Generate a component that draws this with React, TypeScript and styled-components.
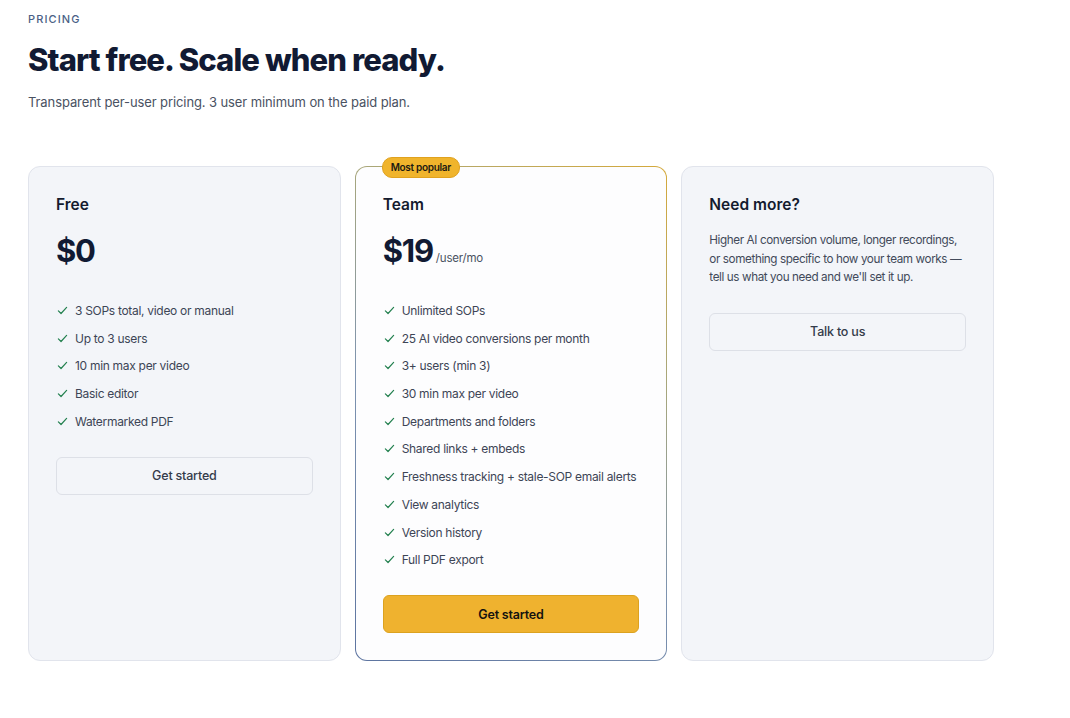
import React from 'react'
import styled, { createGlobalStyle } from 'styled-components'

const GlobalStyle = createGlobalStyle`
  body {
    margin: 0;
    background: #ffffff;
    font-family: Inter, "Noto Sans", sans-serif;
    color: #0f172a;
  }
`

const Page = styled.main`
  padding: 12px 28px 40px;
  width: 966px;
`

const Eyebrow = styled.div`
  font-size: 11px;
  font-weight: 500;
  letter-spacing: 1.1px;
  color: #4b5f86;
  line-height: 14px;
`

const Heading = styled.h1`
  margin: 14px 0 0;
  font-size: 31px;
  font-weight: 800;
  letter-spacing: -0.9px;
  line-height: 40px;
  color: #111a33;
`

const Lead = styled.p`
  margin: 12px 0 0;
  font-size: 13px;
  color: #4a5262;
  line-height: 20px;
  letter-spacing: -0.1px;
`

const Plans = styled.section`
  margin-top: 54px;
  display: grid;
  grid-template-columns: repeat(3, 1fr);
  gap: 14px;
`

const Card = styled.div<{ $featured?: boolean }>`
  position: relative;
  min-height: 494px;
  box-sizing: border-box;
  padding: 27px 27px;
  border-radius: 12px;
  border: 1px solid ${({ $featured }) => ($featured ? 'transparent' : '#e1e4ec')};
  background: ${({ $featured }) =>
    $featured
      ? 'linear-gradient(#fdfdfe, #fdfdfe) padding-box, linear-gradient(215deg, #d5a93a 0%, #a9a77a 30%, #7d93b0 60%, #5d74a0 100%) border-box'
      : '#f3f5f9'};
  display: flex;
  flex-direction: column;
`

const Badge = styled.span`
  position: absolute;
  top: -10px;
  left: 26px;
  padding: 0 8px;
  height: 19px;
  line-height: 19px;
  border-radius: 10px;
  background: #f0b42c;
  border: 1px solid #e0a21f;
  font-size: 10px;
  font-weight: 600;
  letter-spacing: -0.3px;
  color: #1c1a12;
`

const PlanName = styled.h2`
  margin: 0;
  font-size: 15.5px;
  font-weight: 600;
  line-height: 22px;
  color: #141b2e;
`

const PriceRow = styled.div`
  margin-top: 16px;
  display: flex;
  align-items: baseline;
  gap: 3px;
`

const Price = styled.span`
  font-size: 31px;
  font-weight: 700;
  letter-spacing: -1.2px;
  line-height: 38px;
  color: #111a33;
`

const Unit = styled.span`
  font-size: 11.5px;
  letter-spacing: -0.2px;
  color: #4a5262;
`

const Features = styled.ul`
  list-style: none;
  margin: 31px 0 0;
  padding: 0;
  display: flex;
  flex-direction: column;
  gap: 8.7px;
`

const Feature = styled.li`
  display: flex;
  align-items: center;
  gap: 7px;
  font-size: 12px;
  line-height: 19px;
  color: #3d4556;
  letter-spacing: -0.3px;
  white-space: nowrap;
`

const Check = styled.svg`
  width: 11px;
  height: 11px;
  flex: none;
  margin-left: 1px;
`

const Button = styled.button<{ $primary?: boolean }>`
  margin-top: 26px;
  width: 100%;
  height: 38px;
  border-radius: 6px;
  border: 1px solid ${({ $primary }) => ($primary ? '#dca21f' : '#dde0e7')};
  background: ${({ $primary }) => ($primary ? '#efb22f' : 'transparent')};
  font-family: Inter, "Noto Sans", sans-serif;
  font-size: 12.5px;
  letter-spacing: -0.2px;
  font-weight: ${({ $primary }) => ($primary ? 600 : 500)};
  color: ${({ $primary }) => ($primary ? '#14130f' : '#333b4a')};
  cursor: pointer;
`

const Blurb = styled.p`
  margin: 15px 0 0;
  font-size: 11.7px;
  line-height: 18.5px;
  color: #424a5a;
  letter-spacing: -0.4px;
`

const CheckIcon = () => (
  <Check viewBox="0 0 12 12" fill="none">
    <path d="M1.5 6.4 L4.4 9.3 L10.5 2.6" stroke="#23804f" strokeWidth="1.3" strokeLinecap="round" strokeLinejoin="round" />
  </Check>
)

const freeFeatures = [
  '3 SOPs total, video or manual',
  'Up to 3 users',
  '10 min max per video',
  'Basic editor',
  'Watermarked PDF',
]

const teamFeatures = [
  'Unlimited SOPs',
  '25 AI video conversions per month',
  '3+ users (min 3)',
  '30 min max per video',
  'Departments and folders',
  'Shared links + embeds',
  'Freshness tracking + stale-SOP email alerts',
  'View analytics',
  'Version history',
  'Full PDF export',
]

const FeatureList = ({ items }: { items: string[] }) => (
  <Features>
    {items.map((item) => (
      <Feature key={item}>
        <CheckIcon />
        {item}
      </Feature>
    ))}
  </Features>
)

const App = () => (
  <>
    <GlobalStyle />
    <Page>
      <Eyebrow>PRICING</Eyebrow>
      <Heading>Start free. Scale when ready.</Heading>
      <Lead>Transparent per-user pricing. 3 user minimum on the paid plan.</Lead>
      <Plans>
        <Card>
          <PlanName>Free</PlanName>
          <PriceRow>
            <Price>$0</Price>
          </PriceRow>
          <FeatureList items={freeFeatures} />
          <Button>Get started</Button>
        </Card>
        <Card $featured>
          <Badge>Most popular</Badge>
          <PlanName>Team</PlanName>
          <PriceRow>
            <Price>$19</Price>
            <Unit>/user/mo</Unit>
          </PriceRow>
          <FeatureList items={teamFeatures} />
          <Button $primary>Get started</Button>
        </Card>
        <Card>
          <PlanName>Need more?</PlanName>
          <Blurb>
            Higher AI conversion volume, longer recordings, or something specific to how your team works — tell us what you need and we'll set it up.
          </Blurb>
          <Button>Talk to us</Button>
        </Card>
      </Plans>
    </Page>
  </>
)

export default App
